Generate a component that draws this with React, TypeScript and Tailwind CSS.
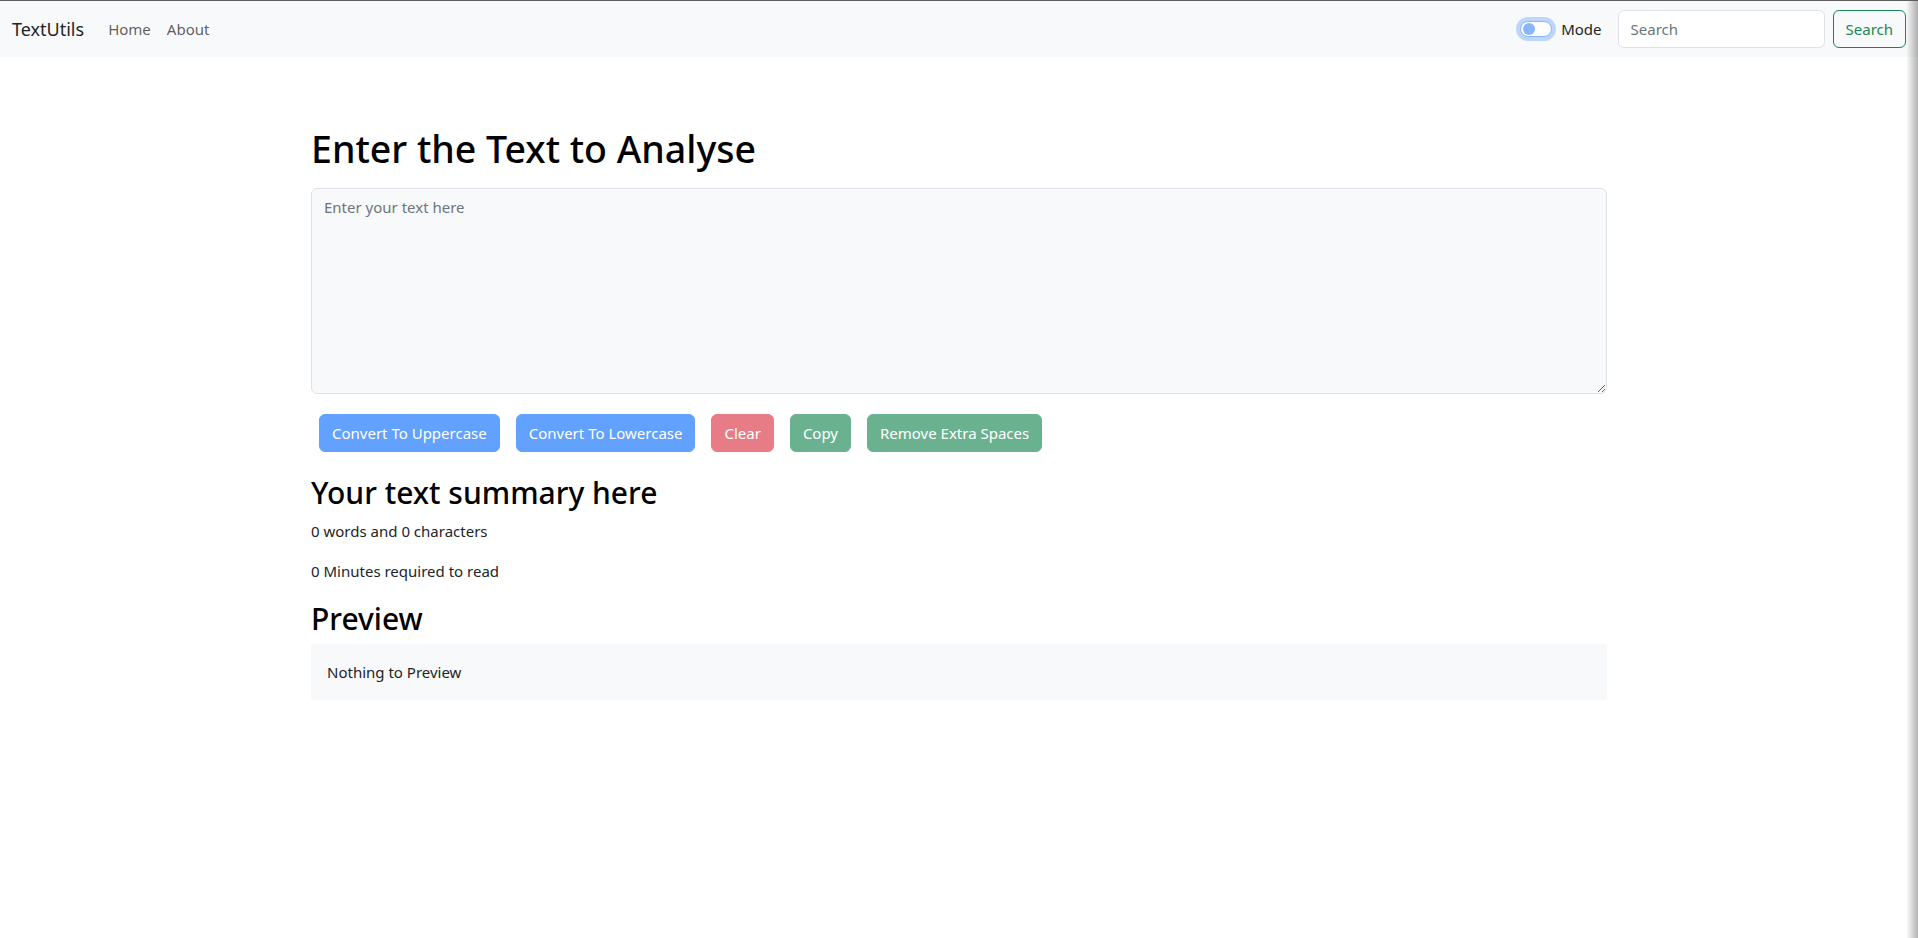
import React from "react";

const font = {
  fontFamily: '"Segoe UI", "Noto Sans", "Liberation Sans", sans-serif',
};

function Navbar() {
  return (
    <nav className="h-[56px] bg-[#f8f9fa] flex items-center px-3">
      <a className="text-[18px] leading-[30px] text-[#212529] mr-4">TextUtils</a>
      <ul className="flex items-center">
        <li>
          <a className="px-2 text-[15px] text-black/65">Home</a>
        </li>
        <li>
          <a className="px-2 text-[15px] text-black/65">About</a>
        </li>
      </ul>

      <div className="ml-auto flex items-center">
        <div className="flex items-center mr-4">
          {/* mode switch, shown focused */}
          <span className="relative w-[32px] h-[16px] rounded-full bg-white border border-[#86b7fe] shadow-[0_0_0_4px_rgba(13,110,253,0.25)]">
            <span className="absolute left-[2px] top-[1px] w-[12px] h-[12px] rounded-full bg-[#86b7fe]" />
          </span>
          <label className="ml-[9px] text-[15px] text-[#212529]">Mode</label>
        </div>
        <form className="flex items-center" onSubmit={(e) => e.preventDefault()}>
          <input
            type="search"
            placeholder="Search"
            className="w-[207px] h-[38px] px-3 mr-2 text-[15px] bg-white border border-[#dee2e6] rounded-[6px] outline-none placeholder:text-[#6c757d]"
          />
          <button className="h-[38px] px-3 text-[15px] text-[#198754] border border-[#198754] rounded-[6px]">
            Search
          </button>
        </form>
      </div>
    </nav>
  );
}

function TextForm({ heading }: { heading: string }) {
  const [text, setText] = React.useState("");
  const empty = text.length === 0;

  const words = text.split(/\s+/).filter((w) => w.length !== 0).length;

  return (
    <>
      <div className="max-w-[1320px] mx-auto px-3">
        <h1 className="pt-[2px] text-[37.5px] leading-[48px] font-medium text-black mb-[15px]">
          {heading}
        </h1>
        <div className="mb-4">
          <textarea
            value={text}
            onChange={(e) => setText(e.target.value)}
            rows={8}
            placeholder="Enter your text here"
            className="block w-full h-[206px] px-3 py-[6px] text-[15px] leading-[24px] text-[#212529] bg-[#f8f9fa] border border-[#dee2e6] rounded-[6px] outline-none placeholder:text-[#6c757d]"
          />
        </div>
        <div className="flex flex-wrap">
          <button disabled={empty} className="mx-2 my-1 h-[38px] px-3 text-[15px] text-white bg-[#62a1fe] border border-[#62a1fe] rounded-[6px]">
            Convert To Uppercase
          </button>
          <button disabled={empty} className="mx-2 my-1 h-[38px] px-3 text-[15px] text-white bg-[#62a1fe] border border-[#62a1fe] rounded-[6px]">
            Convert To Lowercase
          </button>
          <button disabled={empty} className="mx-2 my-1 h-[38px] px-3 text-[15px] text-white bg-[#e87c86] border border-[#e87c86] rounded-[6px]">
            Clear
          </button>
          <button disabled={empty} className="mx-2 my-1 h-[38px] px-3 text-[15px] text-white bg-[#6ab190] border border-[#6ab190] rounded-[6px]">
            Copy
          </button>
          <button disabled={empty} className="mx-2 my-1 h-[38px] px-3 text-[15px] text-white bg-[#6ab190] border border-[#6ab190] rounded-[6px]">
            Remove Extra Spaces
          </button>
        </div>
      </div>

      <div className="max-w-[1320px] mx-auto px-3 my-4 text-[15px] leading-[24px] text-[#212529]">
        <h2 className="pt-[2px] text-[30px] leading-[38px] font-medium text-black mb-[6px]">
          Your text summary here
        </h2>
        <p className="pt-[1px] mb-[15px]">
          {words} words and {text.length} characters
        </p>
        <p className="pt-[1px] mb-[15px]">{0.008 * words} Minutes required to read</p>
        <h2 className="pt-[2px] text-[30px] leading-[38px] font-medium text-black mb-[6px]">
          Preview
        </h2>
        <p className="mt-[2px] p-4 bg-[#f8f9fa]">
          {text.length > 0 ? text : "Nothing to Preview"}
        </p>
      </div>
    </>
  );
}

export default function App() {
  return (
    <div className="relative min-h-screen bg-white border-t border-[#5f5f5f]" style={font}>
      <Navbar />
      <div className="h-[50px]" />
      <div className="mt-4">
        <TextForm heading="Enter the Text to Analyse" />
      </div>
      {/* edge shadow on the right */}
      <div className="absolute top-0 right-0 bottom-0 w-[12px] bg-gradient-to-r from-transparent to-black/30 pointer-events-none" />
    </div>
  );
}
